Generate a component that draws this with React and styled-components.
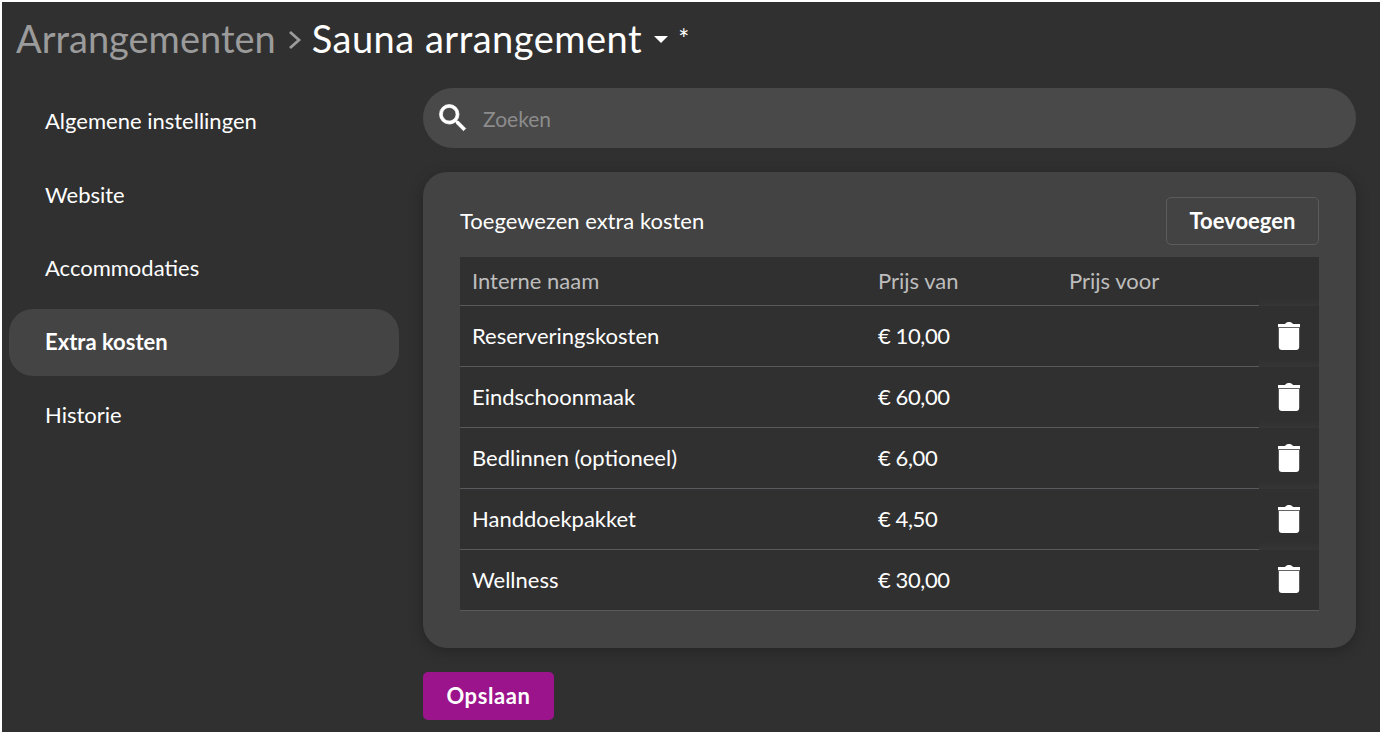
import React from 'react';
import styled, { createGlobalStyle } from 'styled-components';

const GlobalStyle = createGlobalStyle`
  html, body {
    margin: 0;
    padding: 0;
    background: #fff;
  }
  body {
    font-family: "Lato", "Open Sans", sans-serif;
    color: #fff;
  }
  * {
    box-sizing: border-box;
  }
`;

const Page = styled.div`
  width: 1378px;
  height: 730px;
  margin: 2px 0 0 2px;
  background: #303030;
  overflow: hidden;
`;

const Header = styled.h1`
  display: flex;
  align-items: center;
  height: 72px;
  margin: 0;
  padding: 0 0 0 14px;
  font-size: 38px;
  font-weight: 400;
`;

const Crumb = styled.span`
  color: #9b9b9b;
`;

const Current = styled.span`
  color: #fff;
  letter-spacing: 0.5px;
`;

const Separator = styled.svg`
  width: 14px;
  height: 20px;
  margin: 3px 10px 0 12px;
  fill: none;
  stroke: #9b9b9b;
  stroke-width: 2.8;
`;

const Caret = styled.span`
  width: 0;
  height: 0;
  margin: 2px 10px 0 12px;
  border-left: 7.5px solid transparent;
  border-right: 7.5px solid transparent;
  border-top: 7.5px solid #fff;
`;

const Star = styled.span`
  font-size: 26px;
  margin-top: 2px;
`;

const Body = styled.div`
  display: grid;
  grid-template-columns: 390px 933px;
  column-gap: 24px;
  padding: 14px 0 0 7px;
`;

const Nav = styled.nav`
  display: flex;
  flex-direction: column;
  gap: 6px;
`;

const NavItem = styled.div`
  display: flex;
  align-items: center;
  height: 67.5px;
  padding: 0 0 2px 36px;
  border-radius: 24px;
  font-size: 22px;
  font-weight: ${p => (p.$active ? 700 : 400)};
  background: ${p => (p.$active ? '#444444' : 'transparent')};
`;

const Main = styled.main`
  display: flex;
  flex-direction: column;
  align-items: flex-start;
`;

const SearchBar = styled.div`
  display: flex;
  align-items: center;
  gap: 12px;
  width: 100%;
  height: 60px;
  padding-left: 12px;
  border-radius: 30px;
  background: #494949;
`;

const SearchIcon = styled.svg`
  width: 36px;
  height: 36px;
  fill: #fff;
  stroke: #fff;
  stroke-width: 0.5;
`;

const Placeholder = styled.span`
  color: #8c8c8c;
  font-size: 21px;
`;

const Card = styled.section`
  width: 100%;
  margin-top: 24px;
  padding: 25px 37px 37px;
  border-radius: 24px;
  background: #434343;
  box-shadow: 0 3px 14px rgba(0, 0, 0, 0.25);
`;

const CardHead = styled.div`
  display: flex;
  align-items: center;
  justify-content: space-between;
  margin-bottom: 12px;
`;

const CardTitle = styled.h2`
  margin: 0 0 2px;
  font-size: 22px;
  font-weight: 400;
`;

const OutlineButton = styled.button`
  width: 153px;
  height: 48px;
  padding: 0 0 2px;
  border: 1px solid #5c5c5c;
  border-radius: 5px;
  background: transparent;
  color: #fff;
  font: 700 22px "Lato", sans-serif;
`;

const Table = styled.div`
  display: grid;
  grid-template-columns: 406px 191px 202px 60px;
  background: #303030;
`;

const Row = styled.div`
  display: contents;
`;

const Cell = styled.div`
  display: flex;
  align-items: center;
  height: 61px;
  padding: 0 0 2px 12px;
  font-size: 22px;
  border-bottom: 1px solid #5a5a5e;
`;

const HeadCell = styled(Cell)`
  height: 49px;
  color: #bdbdbd;
`;

const PriceCell = styled(Cell)`
  letter-spacing: -0.4px;
`;

const ActionCell = styled.div`
  display: flex;
  align-items: center;
  justify-content: center;
  height: ${p => (p.$head ? 49 : 61)}px;
  ${p => !p.$last && 'background: linear-gradient(to bottom, transparent calc(100% - 8px), #353535 100%);'}
  ${p => p.$last && 'border-bottom: 1px solid #5a5a5e;'}
`;

const TrashIcon = styled.svg`
  width: 22px;
  height: 28px;
  margin-bottom: 2px;
  fill: #fff;
`;

const SaveButton = styled.button`
  width: 131px;
  height: 48px;
  margin-top: 24px;
  padding: 0 0 2px;
  border: 0;
  border-radius: 5px;
  background: #9b148c;
  color: #fff;
  font: 700 22px "Lato", sans-serif;
  letter-spacing: 0.6px;
`;

const navItems = ['Algemene instellingen', 'Website', 'Accommodaties', 'Extra kosten', 'Historie'];

const costs = [
  { name: 'Reserveringskosten', price: '€ 10,00' },
  { name: 'Eindschoonmaak', price: '€ 60,00' },
  { name: 'Bedlinnen (optioneel)', price: '€ 6,00' },
  { name: 'Handdoekpakket', price: '€ 4,50' },
  { name: 'Wellness', price: '€ 30,00' },
];

function Trash() {
  return (
    <TrashIcon viewBox="0 0 22 28">
      <path d="M0 2h7C8 .6 9.500 0 11 0s3 .6 4 2h7v3.300H0z" />
      <path d="M.8 6h20.400v19c0 1.700-1.300 3-3 3H3.800c-1.700 0-3-1.300-3-3z" />
    </TrashIcon>
  );
}

export default function App() {
  return (
    <Page>
      <GlobalStyle />
      <Header>
        <Crumb>Arrangementen</Crumb>
        <Separator viewBox="0 0 14 20">
          <path d="M2 2l9 8-9 8" />
        </Separator>
        <Current>Sauna arrangement</Current>
        <Caret />
        <Star>*</Star>
      </Header>
      <Body>
        <Nav>
          {navItems.map(item => (
            <NavItem key={item} $active={item === 'Extra kosten'}>{item}</NavItem>
          ))}
        </Nav>
        <Main>
          <SearchBar>
            <SearchIcon viewBox="0 0 24 24">
              <path d="M15.500 14h-.79l-.28-.27A6.470 6.470 0 0 0 16 9.500 6.500 6.500 0 1 0 9.500 16c1.610 0 3.090-.59 4.230-1.570l.27.28v.79l5 4.990L20.490 19l-4.990-5zm-6 0C7.010 14 5 11.990 5 9.500S7.010 5 9.500 5 14 7.010 14 9.500 11.990 14 9.500 14z" />
            </SearchIcon>
            <Placeholder>Zoeken</Placeholder>
          </SearchBar>
          <Card>
            <CardHead>
              <CardTitle>Toegewezen extra kosten</CardTitle>
              <OutlineButton>Toevoegen</OutlineButton>
            </CardHead>
            <Table>
              <Row>
                <HeadCell>Interne naam</HeadCell>
                <HeadCell>Prijs van</HeadCell>
                <HeadCell>Prijs voor</HeadCell>
                <ActionCell $head />
              </Row>
              {costs.map((cost, i) => (
                <Row key={cost.name}>
                  <Cell>{cost.name}</Cell>
                  <PriceCell>{cost.price}</PriceCell>
                  <Cell />
                  <ActionCell $last={i === costs.length - 1}><Trash /></ActionCell>
                </Row>
              ))}
            </Table>
          </Card>
          <SaveButton>Opslaan</SaveButton>
        </Main>
      </Body>
    </Page>
  );
}
